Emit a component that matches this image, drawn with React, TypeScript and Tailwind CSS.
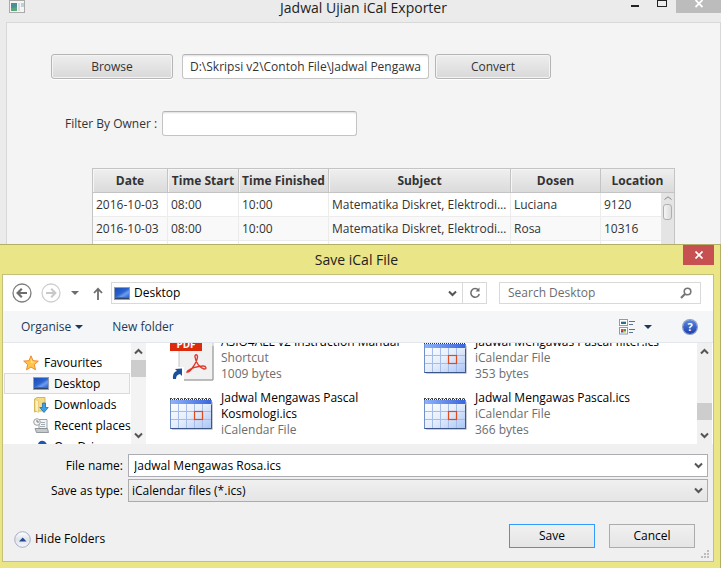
import { useState } from "react";
import type { ReactNode } from "react";

const exams = [
  { date: "2016-10-03", start: "08:00", end: "10:00", subject: "Matematika Diskret, Elektrodinamika", dosen: "Luciana", room: "9120" },
  { date: "2016-10-03", start: "08:00", end: "10:00", subject: "Matematika Diskret, Elektrodinamika", dosen: "Rosa", room: "10316" },
  { date: "", start: "", end: "", subject: "", dosen: "", room: "" },
];

const fxButton =
  "h-[25px] rounded-[3px] border border-[#b5b5b5] bg-linear-to-b from-[#eeeeee] to-[#d9d9d9] text-[#333] shadow-[inset_0_0_0_1px_#f4f4f4,0_1px_0_#fff]";
const fxInput =
  "h-[25px] rounded-[3px] border border-[#c4c4c4] border-t-[#b2b2b2] bg-white px-[7px] text-[#333] shadow-[inset_0_2px_2px_-1px_#ddd] outline-none";

function Chevron({ up = false, color = "#555" }: { up?: boolean; color?: string }) {
  return (
    <svg width="9" height="7" viewBox="0 0 9 7" className="shrink-0">
      <path d={up ? "M1 5.5 4.5 2 8 5.5" : "M1 1.5 4.5 5 8 1.5"} fill="none" stroke={color} strokeWidth="2" />
    </svg>
  );
}

function Caret({ color }: { color: string }) {
  return (
    <svg width="8" height="4" viewBox="0 0 8 4" className="shrink-0">
      <path d="M0 0h8L4 4z" fill={color} />
    </svg>
  );
}

function DesktopIcon() {
  return (
    <svg width="16" height="13" viewBox="0 0 16 13" className="shrink-0">
      <defs>
        <linearGradient id="screen" x1="0" y1="0" x2="1" y2="1">
          <stop offset="0" stopColor="#1d4dae" />
          <stop offset=".5" stopColor="#2a62d0" />
          <stop offset=".7" stopColor="#6d9df0" />
          <stop offset="1" stopColor="#2b64cf" />
        </linearGradient>
      </defs>
      <rect x=".5" y=".5" width="15" height="12" fill="#50698c" stroke="#8fa0b5" />
      <rect x="1" y="1" width="14" height="9" fill="url(#screen)" />
      <path d="M1 11.5h14" stroke="#2f4561" />
    </svg>
  );
}

function StarIcon() {
  return (
    <svg width="16" height="16" viewBox="0 0 16 16" className="shrink-0">
      <path d="M8 .8 10 5.7l5.3.4-4 3.5 1.2 5.2L8 12l-4.5 2.8 1.2-5.2-4-3.5L6 5.700z" fill="#ffc64a" stroke="#ee8a2c" strokeLinejoin="round" />
      <path d="M8 3.200 9 6.600l3 .3-4 1z" fill="#ffe6a0" />
    </svg>
  );
}

function DownloadsIcon() {
  return (
    <svg width="16" height="16" viewBox="0 0 16 16" className="shrink-0">
      <path d="M1.500 2 4 .5h8V14H4l-2.500 1z" fill="#f6dc86" stroke="#d8b457" />
      <path d="M2 2.200 5.500 4v11.500L2 13.500z" fill="#fdf0b8" stroke="#dcbc66" strokeWidth=".6" />
      <path d="M9.500 6h3v4.500h2.700L11 15.500l-4.200-5h2.700z" fill="#3fa0ea" stroke="#1e6fb8" strokeWidth=".8" />
    </svg>
  );
}

function RecentIcon() {
  return (
    <svg width="16" height="15" viewBox="0 0 16 15" className="shrink-0">
      <path d="M6 1.500h8v9H6z" fill="#f2f4f5" stroke="#9ba3a8" />
      <path d="M8 4.500h4M8 6.500h4M7 8.500h5" stroke="#a5adb2" />
      <path d="M2 10.500h12.500l1 4h-12z" fill="#c3c9cd" stroke="#7e878d" strokeWidth=".8" />
      <circle cx="4" cy="4" r="3.300" fill="#f5f5f5" stroke="#9aa0a5" />
      <path d="M4 2v2h2" fill="none" stroke="#555" strokeWidth=".8" />
    </svg>
  );
}

function CloudIcon() {
  return (
    <svg width="16" height="14" viewBox="0 0 16 14" className="shrink-0">
      <path d="M3 8a3 3 0 0 1 2-4 4.500 4.500 0 0 1 8.500-.5L14 5a3 3 0 0 1 0 6H4z" fill="#1d57b5" />
    </svg>
  );
}

function CalendarIcon() {
  return (
    <svg width="43" height="33" viewBox="0 0 43 33" className="shrink-0">
      <defs>
        <linearGradient id="page" x1="0" y1="0" x2="1" y2="1">
          <stop offset="0" stopColor="#ffffff" />
          <stop offset=".5" stopColor="#e6eefc" />
          <stop offset="1" stopColor="#a9c4f6" />
        </linearGradient>
        <linearGradient id="band" x1="0" x2="1">
          <stop offset="0" stopColor="#8fb2fa" />
          <stop offset="1" stopColor="#3a66dd" />
        </linearGradient>
      </defs>
      <path d="M2 32.500h40.500V5" fill="none" stroke="#c9ccd2" />
      <rect x=".5" y="3.500" width="41" height="28" fill="url(#page)" stroke="#6f8fc8" />
      <path d="M.5 31.500h41V8" fill="none" stroke="#3c5687" />
      <rect x="1" y="3" width="40" height="4" fill="url(#band)" />
      <path d="M8.500 7v24M16.500 7v24M24.500 7v24M32.500 7v24M1 14.500h40M1 22.500h40" stroke="#a3bce8" />
      <path d="M0 2.500h42" stroke="#333" strokeDasharray="1 1" />
      <path d="M0 1.500h42" stroke="#444" strokeDasharray="2 1.500" />
      <rect x="24.500" y="14.500" width="8" height="8" fill="none" stroke="#e04a1c" strokeWidth="1.200" />
    </svg>
  );
}

function PdfIcon() {
  return (
    <svg width="44" height="47" viewBox="0 0 44 47" className="shrink-0">
      <path d="M9 1h26l8 8v37H9z" fill="#f1f1f1" stroke="#c4c4c4" />
      <path d="M10 46h33V12" fill="none" stroke="#999" />
      <rect x="0" y="3" width="32" height="14" fill="#dc2a0c" />
      <text x="16" y="14" textAnchor="middle" fontSize="10" fontWeight="700" fill="#fff" fontFamily="'Open Sans',sans-serif">PDF</text>
      <path d="M17 38c3 1 10-10 10.500-15 .2-3-3-3-2.500 0 .8 6 5 11 9 12 3 .5 2.500-3-1-3-5 0-14 2.500-16 6z" fill="none" stroke="#e2382a" strokeWidth="1.400" />
      <rect x="1" y="33" width="13" height="14" fill="#fff" />
      <path d="M3 45c-.5-5 1.500-7.500 4-8L5 35l7-.5V42l-2-2c-3 .5-4 2.500-4 5z" fill="#1b4f9c" />
    </svg>
  );
}

function SideRow({ icon, label, selected = false, heading = false }: { icon: ReactNode; label: string; selected?: boolean; heading?: boolean }) {
  return (
    <li className="flex">
      <button
        className={`flex h-[21px] w-full items-center gap-[5px] border text-left whitespace-nowrap ${
          heading ? "pl-[18px]" : "pl-7"
        } ${selected ? "border-[#dadada] bg-[#f7f7f7]" : "border-transparent"}`}
      >
        {icon}
        {label}
      </button>
    </li>
  );
}

function FileItem({ icon, name, lines }: { icon: ReactNode; name: string; lines: string[] }) {
  return (
    <li className="flex h-14 items-start">
      <span className="flex h-[46px] w-[51px] shrink-0 items-center">{icon}</span>
      <div className="max-w-[200px] leading-4 text-[#6d6d6d]">
        <p className="text-black">{name}</p>
        {lines.map((l) => (
          <p key={l}>{l}</p>
        ))}
      </div>
    </li>
  );
}

function ExporterWindow() {
  const [path, setPath] = useState("D:\\Skripsi v2\\Contoh File\\Jadwal Pengawas UTS.xls");
  const [owner, setOwner] = useState("");
  const th = "border-r border-[#c4c4c4] p-0 text-center font-bold shadow-[inset_1px_1px_0_#f6f6f6]";
  const td = "border-r border-[#ececec] pl-[3px] pr-0 py-0 truncate";
  return (
    <div className="flex h-full flex-col overflow-hidden">
      <header className="flex h-[22px] shrink-0 items-start">
        <svg width="16" height="14" viewBox="0 0 16 14" className="ml-[9px]">
          <rect x=".5" y=".5" width="15" height="12" fill="#f4f4f4" stroke="#aaa" />
          <rect x="2" y="3" width="6" height="8" fill="#4a8f98" />
          <path d="M2 11V8l6-1v4z" fill="#57a77a" />
          <rect x="9" y="3" width="2" height="8" fill="#ddd" />
          <rect x="12" y="3" width="3" height="4" fill="#b3d8d4" />
        </svg>
        <h1 className="flex-1 pl-20 text-center text-[14px] leading-4 text-[#222]">Jadwal Ujian iCal Exporter</h1>
        <button aria-label="Minimize" className="flex h-[13px] w-[26px] justify-center pt-[5px]">
          <span className="h-0.5 w-2 bg-[#222]" />
        </button>
        <button aria-label="Maximize" className="flex h-[13px] w-[28px] justify-center">
          <span className="h-[7px] w-[10px] border border-[#222]" />
        </button>
        <button aria-label="Close" className="flex h-[13px] w-[45px] justify-center bg-[#bcbcbc]">
          <svg width="8" height="8" viewBox="0 0 8 8"><path d="M.5 0 7.500 7M7.500 0 .5 7" stroke="#fff" strokeWidth="1.800" /></svg>
        </button>
      </header>
      <main className="ml-1.5 flex-1 border border-[#d8d8d8] bg-[#f4f4f4] pt-[31px] pr-[45px] pl-11 text-[#333]">
        <div className="flex">
          <button className={`${fxButton} mr-[9px] w-[122px]`}>Browse</button>
          <input aria-label="Schedule file" value={path} onChange={(e) => setPath(e.target.value)} className={`${fxInput} mr-1.5 w-[247px]`} />
          <button className={`${fxButton} w-[116px]`}>Convert</button>
        </div>
        <div className="mt-8 flex items-center pl-3.5">
          <label htmlFor="owner" className="w-[97px]">Filter By Owner :</label>
          <input id="owner" value={owner} onChange={(e) => setOwner(e.target.value)} className={`${fxInput} w-[195px]`} />
        </div>
        <div className="relative mt-8 ml-[41px] border border-[#c4c4c4] bg-white">
          <table className="w-full table-fixed border-separate border-spacing-0">
            <colgroup>
              <col className="w-[75px]" />
              <col className="w-[71px]" />
              <col className="w-[90px]" />
              <col />
              <col className="w-[90px]" />
              <col className="w-[73px]" />
            </colgroup>
            <thead>
              <tr className="h-6 bg-linear-to-b from-[#efefef] to-[#dadada]">
                <th className={`${th} border-b`}>Date</th>
                <th className={`${th} border-b`}>Time Start</th>
                <th className={`${th} border-b`}>Time Finished</th>
                <th className={`${th} border-b`}>Subject</th>
                <th className={`${th} border-b`}>Dosen</th>
                <th className="border-b border-[#c4c4c4] p-0 text-center font-bold">Location</th>
              </tr>
            </thead>
            <tbody>
              {exams.map((e, i) => (
                <tr key={i} className="h-6 odd:bg-white even:bg-[#f9f9f9]">
                  <td className={`${td} border-b`}>{e.date}</td>
                  <td className={`${td} border-b`}>{e.start}</td>
                  <td className={`${td} border-b`}>{e.end}</td>
                  <td className={`${td} border-b`}>{e.subject}</td>
                  <td className={`${td} border-b`}>{e.dosen}</td>
                  <td className={`${td} border-b`}>{e.room}</td>
                </tr>
              ))}
            </tbody>
          </table>
          <div className="absolute top-6 right-0 bottom-0 flex w-[13px] flex-col items-center bg-[#e4e4e4] pt-[3px]">
            <svg width="8" height="4" viewBox="0 0 8 4"><path d="M.5 3.500 4 .8l3.500 2.700" fill="none" stroke="#888" /></svg>
            <span className="mt-1 h-4 w-[9px] rounded-[3px] border border-[#b0b0b0] bg-linear-to-r from-[#f4f4f4] to-[#dcdcdc]" />
          </div>
        </div>
      </main>
    </div>
  );
}

function SaveDialog() {
  const [fileName, setFileName] = useState("Jadwal Mengawas Rosa.ics");
  const [query, setQuery] = useState("");
  return (
    <section role="dialog" aria-label="Save iCal File" className="absolute inset-x-0 top-[244px] bottom-0 flex flex-col border-t border-r border-[#b3af66] bg-[#eae587] pr-1.5 pb-1.5 pl-0.5 text-black">
      <header className="flex h-[29px] shrink-0 items-start">
        <h2 className="flex-1 pl-7 text-center text-[14px] leading-[30px] text-[#222]">Save iCal File</h2>
        <button aria-label="Close dialog" className="flex h-5 w-[31px] items-center justify-center bg-[#c75050]">
          <svg width="8" height="8" viewBox="0 0 8 8"><path d="M.5.5l7 7M7.500.5l-7 7" stroke="#fff" strokeWidth="1.700" /></svg>
        </button>
      </header>
      <div className="flex min-h-0 flex-1 flex-col border border-[#c4c07a] bg-[#f0f0f0]">
        <nav className="flex h-9 shrink-0 items-center bg-white pr-3 pl-[9px]">
          <button aria-label="Back">
            <svg width="20" height="20" viewBox="0 0 20 20">
              <circle cx="10" cy="10" r="9" fill="none" stroke="#7d7d7d" strokeWidth="1.300" />
              <path d="M15 10H6M9.800 5.800 5.600 10l4.200 4.200" fill="none" stroke="#6d6d6d" strokeWidth="2.200" />
            </svg>
          </button>
          <button aria-label="Forward" className="ml-[9px]">
            <svg width="20" height="20" viewBox="0 0 20 20">
              <circle cx="10" cy="10" r="9" fill="none" stroke="#cfcfcf" strokeWidth="1.300" />
              <path d="M5 10h9M10.200 5.800 14.400 10l-4.200 4.200" fill="none" stroke="#c8c8c8" strokeWidth="2" />
            </svg>
          </button>
          <button aria-label="Recent locations" className="ml-2.5"><Caret color="#6d6d6d" /></button>
          <button aria-label="Up" className="ml-3.5">
            <svg width="10" height="13" viewBox="0 0 10 13">
              <path d="M5 13V2M1 6l4-4.200L9 6" fill="none" stroke="#6d6d6d" strokeWidth="1.800" />
            </svg>
          </button>
          <div className="ml-2 flex h-[22px] flex-1 items-center border border-[#d9d9d9] pl-0.5">
            <DesktopIcon />
            <span className="flex-1 pl-1">Desktop</span>
            <button aria-label="Show locations" className="mr-[5px]"><Chevron /></button>
            <button aria-label="Refresh" className="flex h-5 w-[24px] items-center justify-center border-l border-[#d9d9d9]">
              <svg width="12" height="12" viewBox="0 0 12 12">
                <path d="M9.500 3.200A4.300 4.300 0 1 0 10.300 7" fill="none" stroke="#6d6d6d" strokeWidth="1.500" />
                <path d="M6.500 4.500h4V.5z" fill="#6d6d6d" />
              </svg>
            </button>
          </div>
          <div className="ml-3 flex h-[22px] w-[202px] items-center border border-[#d9d9d9] pr-2 pl-2">
            <input type="search" aria-label="Search Desktop" placeholder="Search Desktop" value={query} onChange={(e) => setQuery(e.target.value)} className="min-w-0 flex-1 outline-none placeholder:text-[#6d6d6d]" />
            <svg width="12" height="12" viewBox="0 0 12 12">
              <circle cx="7.500" cy="4.500" r="3.300" fill="none" stroke="#757575" strokeWidth="1.600" />
              <path d="M5.200 6.800 1 11" stroke="#757575" strokeWidth="2.200" />
            </svg>
          </div>
        </nav>

        <div className="flex h-8 shrink-0 items-center border-b border-[#e3e7eb] bg-[#f5f6f7] pr-4 pl-[18px] text-[#1e395b]">
          <button className="flex items-center gap-1">Organise <Caret color="#1e395b" /></button>
          <button className="ml-[29px]">New folder</button>
          <button aria-label="Change view" className="ml-auto">
            <svg width="16" height="16" viewBox="0 0 16 16">
              <rect x=".5" y=".5" width="8" height="6" fill="#fff" stroke="#8c9bb3" />
              <path d="M2 2h5v1H2z" fill="#a9d6ee" /><path d="M2 3h5v2H2z" fill="#2d6a8e" />
              <rect x=".5" y="8.500" width="8" height="6.500" fill="#fff" stroke="#8c9bb3" />
              <path d="M2 10h2.500v2H2z" fill="#e0442e" /><path d="M4.500 10H7v2H4.500z" fill="#46a13c" />
              <path d="M2 12h2.500v1.500H2z" fill="#2c56c5" /><path d="M4.500 12H7v1.500H4.500z" fill="#e5b428" />
              <path d="M10 2.500h6M10 5.500h4M10 10.500h6M10 13.500h4" stroke="#5f7390" />
            </svg>
          </button>
          <button aria-label="View options" className="ml-[9px]"><Caret color="#1e395b" /></button>
          <button aria-label="Help" className="ml-[31px] h-3.5 w-3.5 rounded-full bg-linear-to-b from-[#5b86e0] to-[#1c3fae] text-center text-[11px] leading-[14px] font-bold text-white shadow-[0_0_0_1px_#8a9ac0]">?</button>
        </div>

        <div className="flex h-[101px] shrink-0 overflow-hidden bg-white">
          <ul className="w-[128px] shrink-0 pt-[9px] pr-px pl-px">
            <SideRow icon={<StarIcon />} label="Favourites" heading />
            <SideRow icon={<DesktopIcon />} label="Desktop" selected />
            <SideRow icon={<DownloadsIcon />} label="Downloads" />
            <SideRow icon={<RecentIcon />} label="Recent places" />
            <SideRow icon={<CloudIcon />} label="OneDrive" />
          </ul>
          <div className="flex w-[15px] shrink-0 flex-col items-center justify-between bg-[#f3f3f3] py-[5px]">
            <Chevron up />
            <span className="mt-[5px] mb-auto h-[17px] w-full bg-[#cdcdcd]" />
            <Chevron />
          </div>
          <ul className="-mt-[9px] grid h-28 flex-1 grid-cols-[254px_1fr] pl-[24px]">
            <FileItem icon={<PdfIcon />} name="ASIO4ALL v2 Instruction Manual" lines={["Shortcut", "1009 bytes"]} />
            <FileItem icon={<CalendarIcon />} name="Jadwal Mengawas Pascal filter.ics" lines={["iCalendar File", "353 bytes"]} />
            <FileItem icon={<CalendarIcon />} name="Jadwal Mengawas Pascal Kosmologi.ics" lines={["iCalendar File"]} />
            <FileItem icon={<CalendarIcon />} name="Jadwal Mengawas Pascal.ics" lines={["iCalendar File", "366 bytes"]} />
          </ul>
          <div className="mr-px flex w-[15px] shrink-0 flex-col items-center justify-between bg-[#f0f0f0] py-[5px]">
            <Chevron up />
            <span className="mt-auto mb-3 h-[17px] w-full bg-[#cdcdcd]" />
            <Chevron />
          </div>
        </div>

        <div className="grid grid-cols-[120px_1fr] items-center gap-x-[5px] gap-y-0.5 pt-2.5 pr-[5px]">
          <label htmlFor="file-name" className="text-right">File name:</label>
          <div className="flex h-[23px] items-center border border-[#abadb3] bg-white pr-1 pl-[5px]">
            <input id="file-name" value={fileName} onChange={(e) => setFileName(e.target.value)} className="min-w-0 flex-1 outline-none" />
            <button aria-label="Previous names"><Chevron /></button>
          </div>
          <label htmlFor="file-type" className="text-right">Save as type:</label>
          <div className="relative flex h-[23px] items-center border border-[#acacac] bg-linear-to-b from-[#f0f0f0] to-[#e5e5e5]">
            <select id="file-type" className="h-full w-full appearance-none bg-transparent pl-[3px] outline-none">
              <option>iCalendar files (*.ics)</option>
            </select>
            <span className="pointer-events-none absolute inset-y-0 right-1 flex items-center"><Chevron /></span>
          </div>
        </div>

        <footer className="flex flex-1 items-start pt-[22px] pr-[18px] pl-[11px]">
          <button className="flex h-[30px] items-center gap-1">
            <svg width="17" height="17" viewBox="0 0 17 17">
              <defs>
                <linearGradient id="knob" x1="0" y1="0" x2="0" y2="1">
                  <stop offset="0" stopColor="#ffffff" />
                  <stop offset=".5" stopColor="#dfe4ea" />
                  <stop offset="1" stopColor="#f5f8fb" />
                </linearGradient>
              </defs>
              <circle cx="8.500" cy="8.500" r="7.800" fill="url(#knob)" stroke="#a3adc6" />
              <path d="M5 10.500h7.500L8.700 6.500z" fill="#24478f" />
            </svg>
            Hide Folders
          </button>
          <button className="ml-auto h-6 w-[86px] border border-[#3399ff] bg-linear-to-b from-[#f0f0f0] to-[#e5e5e5]">Save</button>
          <button className="ml-3.5 h-6 w-[86px] border border-[#acacac] bg-linear-to-b from-[#f0f0f0] to-[#e5e5e5]">Cancel</button>
        </footer>
        <svg width="9" height="9" viewBox="0 0 9 9" className="absolute right-2.5 bottom-[9px]">
          <path d="M6 0h2v2H6zM3 3h2v2H3zM6 3h2v2H6zM0 6h2v2H0zM3 6h2v2H3zM6 6h2v2H6z" fill="#bdbdbd" />
        </svg>
      </div>
    </section>
  );
}

export default function App() {
  return (
    <div className="relative h-screen min-h-[568px] overflow-hidden bg-[#ebebeb] font-['Open_Sans','Noto_Sans',sans-serif] text-[12px] leading-4">
      <ExporterWindow />
      <SaveDialog />
    </div>
  );
}
